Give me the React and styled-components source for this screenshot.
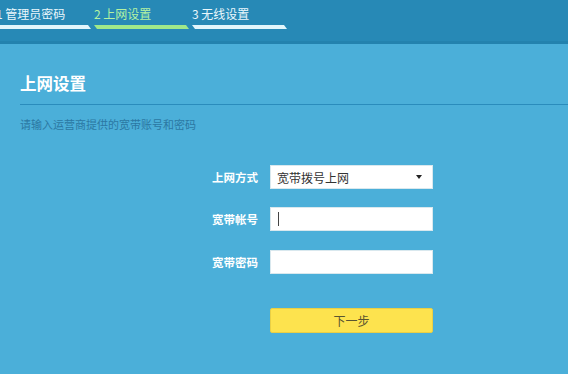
import React from 'react';
import styled, { createGlobalStyle } from 'styled-components';

const Global = createGlobalStyle`
  body {
    margin: 0;
    background: #4bafd9;
    font-family: "Noto Sans CJK SC", "Noto Sans", sans-serif;
    overflow: hidden;
  }
`;

const Header = styled.div`
  height: 41px;
  background: #2789b6;
  border-bottom: 3px solid #2382ae;
  overflow: hidden;
`;

const Steps = styled.div`
  display: flex;
  margin-left: -4px;
`;

const Step = styled.div`
  width: 98px;
  display: flex;
  flex-direction: column;
`;

const StepText = styled.div`
  height: 25px;
  line-height: 28px;
  font-size: 12px;
  color: ${p => (p.active ? '#b4f2a2' : '#eaf7fc')};
  white-space: nowrap;
`;

const Bar = styled.div`
  width: 95px;
  height: 4px;
  background: ${p => (p.active ? '#9fe88a' : '#e2f6fc')};
  clip-path: polygon(0 0, calc(100% - 3px) 0, 100% 100%, 3px 100%);
`;

const Content = styled.div`
  padding-left: 20px;
`;

const Title = styled.h2`
  margin: 28px 0 0;
  font-size: 16.5px;
  line-height: 22px;
  font-weight: bold;
  color: #ffffff;
`;

const Rule = styled.div`
  margin-top: 10px;
  height: 1px;
  background: #2a8cbc;
`;

const Hint = styled.div`
  margin-top: 11px;
  font-size: 11px;
  line-height: 16px;
  color: #2c78a3;
`;

const Form = styled.div`
  margin-top: 33px;
  display: flex;
  flex-direction: column;
`;

const Row = styled.div`
  display: flex;
  align-items: center;
  gap: 12px;
  margin-bottom: ${p => p.gap}px;
`;

const Label = styled.div`
  width: 238px;
  text-align: right;
  font-size: 11.5px;
  font-weight: bold;
  color: #ffffff;
`;

const Field = styled.div`
  width: 163px;
  height: 24px;
  box-sizing: border-box;
  background: #ffffff;
  border: 1px solid #d9e8ee;
  display: flex;
  align-items: center;
  justify-content: space-between;
  padding: 0 10px 0 6px;
  font-size: 12px;
  color: #333;
`;

const Caret = styled.span`
  width: 1px;
  height: 14px;
  background: #444;
  margin-left: 1px;
`;

const Arrow = styled.span`
  width: 0;
  height: 0;
  border-left: 3px solid transparent;
  border-right: 3px solid transparent;
  border-top: 4px solid #222;
`;

const Button = styled.button`
  margin-left: 250px;
  width: 163px;
  height: 25px;
  background: #fde34e;
  border: 1px solid #e9cf45;
  border-radius: 2px;
  font-family: inherit;
  font-size: 12px;
  color: #5a5530;
  padding: 0;
`;

const steps = ['1 管理员密码', '2 上网设置', '3 无线设置'];

export default function App() {
  return (
    <>
      <Global />
      <Header>
        <Steps>
          {steps.map((s, i) => (
            <Step key={s}>
              <StepText active={i === 1}>{s}</StepText>
              <Bar active={i === 1} />
            </Step>
          ))}
        </Steps>
      </Header>
      <Content>
        <Title>上网设置</Title>
        <Rule />
        <Hint>请输入运营商提供的宽带账号和密码</Hint>
        <Form>
          <Row gap={18}>
            <Label>上网方式</Label>
            <Field>
              <span>宽带拨号上网</span>
              <Arrow />
            </Field>
          </Row>
          <Row gap={19}>
            <Label>宽带帐号</Label>
            <Field>
              <Caret />
            </Field>
          </Row>
          <Row gap={34}>
            <Label>宽带密码</Label>
            <Field />
          </Row>
          <Button>下一步</Button>
        </Form>
      </Content>
    </>
  );
}
